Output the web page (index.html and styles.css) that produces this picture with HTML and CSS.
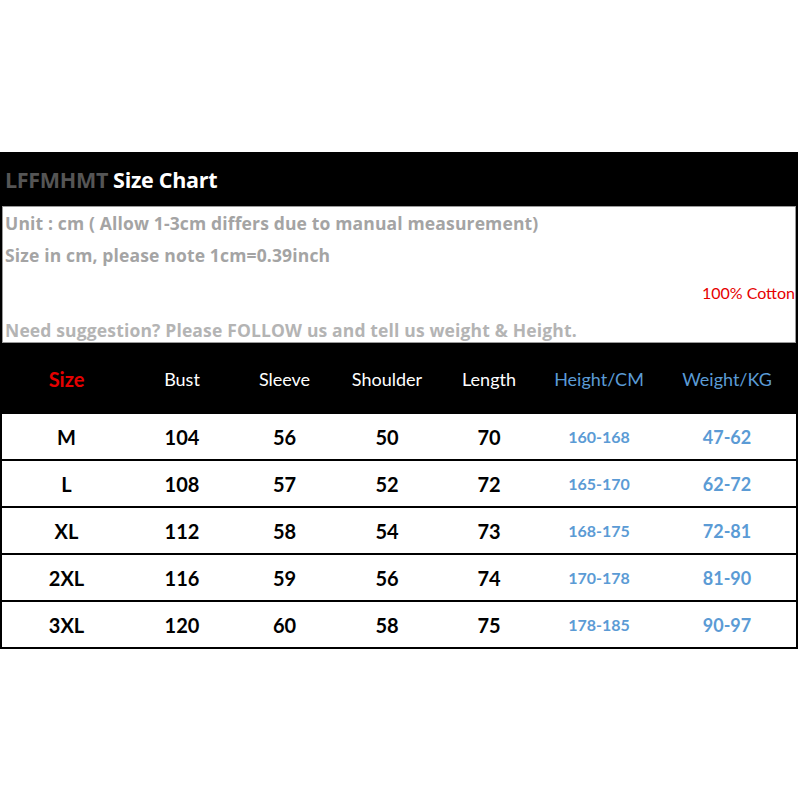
FILE: index.html
```html
<!DOCTYPE html>
<html>
<head>
<meta charset="utf-8">
<link rel="stylesheet" href="styles.css">
</head>
<body>
<div class="page">
  <div class="chart">
    <div class="title"><span class="brand">LFFMHMT</span> <span class="name">Size Chart</span></div>
    <div class="info">
      <div class="line l1">Unit : cm ( Allow 1-3cm differs due to manual measurement)</div>
      <div class="line l2">Size in cm, please note 1cm=0.39inch</div>
      <div class="cotton">100% Cotton</div>
      <div class="line l3">Need suggestion? Please FOLLOW us and tell us weight &amp; Height.</div>
    </div>
    <div class="row head">
      <div class="c size">Size</div>
      <div class="c">Bust</div>
      <div class="c">Sleeve</div>
      <div class="c">Shoulder</div>
      <div class="c">Length</div>
      <div class="c blue">Height/CM</div>
      <div class="c blue">Weight/KG</div>
    </div>
    <div class="row data">
      <div class="c">M</div><div class="c">104</div><div class="c">56</div><div class="c">50</div><div class="c">70</div><div class="c h">160-168</div><div class="c w">47-62</div>
    </div>
    <div class="row data">
      <div class="c">L</div><div class="c">108</div><div class="c">57</div><div class="c">52</div><div class="c">72</div><div class="c h">165-170</div><div class="c w">62-72</div>
    </div>
    <div class="row data">
      <div class="c">XL</div><div class="c">112</div><div class="c">58</div><div class="c">54</div><div class="c">73</div><div class="c h">168-175</div><div class="c w">72-81</div>
    </div>
    <div class="row data">
      <div class="c">2XL</div><div class="c">116</div><div class="c">59</div><div class="c">56</div><div class="c">74</div><div class="c h">170-178</div><div class="c w">81-90</div>
    </div>
    <div class="row data last">
      <div class="c">3XL</div><div class="c">120</div><div class="c">60</div><div class="c">58</div><div class="c">75</div><div class="c h">178-185</div><div class="c w">90-97</div>
    </div>
  </div>
</div>
</body>
</html>
```
FILE: styles.css
```css
html, body {
  margin: 0;
  padding: 0;
  background: #fff;
}
.page {
  width: 800px;
  height: 800px;
  padding-top: 152px;
  box-sizing: border-box;
  font-family: Lato, "Open Sans", sans-serif;
}
.chart {
  width: 798px;
  background: #000;
  padding: 0 2px 2px 2px;
  box-sizing: border-box;
}
.title {
  height: 54px;
  display: flex;
  align-items: center;
  padding-left: 3px;
  font-family: "Open Sans", Lato, sans-serif;
  font-size: 21.5px;
  font-weight: 700;
  gap: 5px;
}
.brand { color: #555; letter-spacing: -0.3px; }
.name { color: #fff; letter-spacing: -0.3px; }
.info {
  background: #fff;
  border: 1px solid #9a9a9a;
  height: 137px;
  box-sizing: border-box;
  display: flex;
  flex-direction: column;
  padding: 6px 0 0 2px;
  font-family: "Open Sans", Lato, sans-serif;
}
.line {
  font-size: 17.5px;
  font-weight: 700;
  color: #a4a4a4;
  line-height: 20px;
  letter-spacing: 0.15px;
}
.l2 { margin-top: 12px; }
.cotton {
  align-self: flex-end;
  color: #e60000;
  font-family: Lato, sans-serif;
  font-size: 16px;
  margin-top: 18px;
  line-height: 20px;
}
.l3 { margin-top: 17px; color: #b4b4b4; }
.row {
  display: grid;
  grid-template-columns: 129px 102px 103px 102px 102px 118px 138px;
  align-items: center;
}
.row .c { text-align: center; }
.head {
  height: 71px;
  color: #fff;
  font-size: 18px;
}
.head .size { color: #e60000; font-weight: 700; font-size: 20px; }
.head .blue { color: #5b9bd5; }
.data {
  background: #fff;
  height: 45px;
  margin-bottom: 2px;
  font-size: 20px;
  font-weight: 700;
  color: #000;
}
.data.last { margin-bottom: 0; }
.data .h { color: #5b9bd5; font-size: 16px; }
.data .w { color: #5b9bd5; font-size: 18px; }
```
